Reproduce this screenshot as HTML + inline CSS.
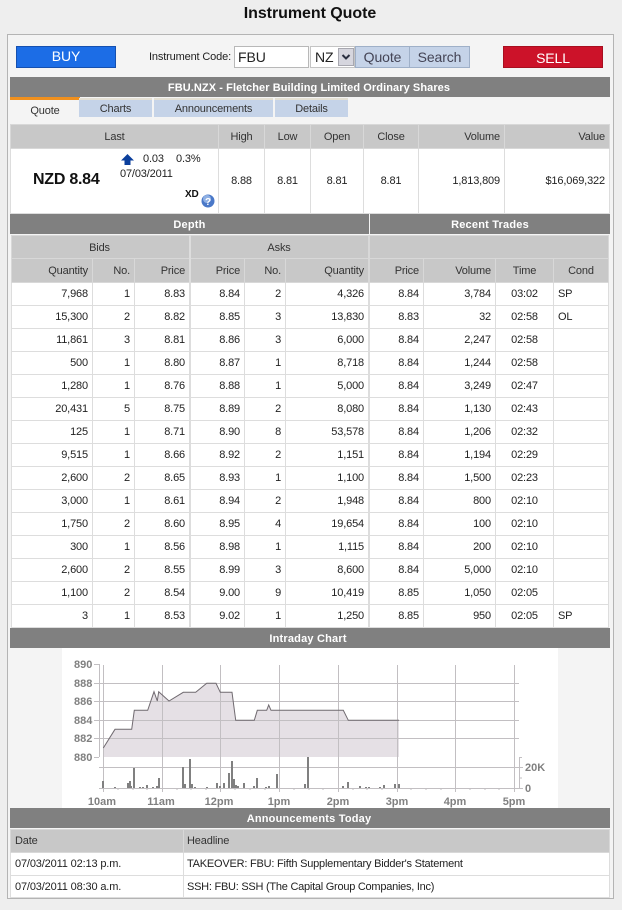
<!DOCTYPE html>
<html><head><meta charset="utf-8"><title>Instrument Quote</title>
<style>
html,body{margin:0;padding:0;background:#eeeeee;}
body{width:622px;height:910px;position:relative;overflow:hidden;font:11px "Liberation Sans",Arial,sans-serif;letter-spacing:-.15px;color:#222;}
.a{position:absolute;white-space:nowrap;}
.bar{position:absolute;left:10px;width:600px;height:20px;line-height:22px;background:#808080;color:#fff;font-weight:bold;font-size:11px;text-align:center;letter-spacing:.2px;}
.btn{position:absolute;top:46px;height:22px;box-sizing:border-box;line-height:20px;text-align:center;letter-spacing:-.1px;}
.tab{position:absolute;top:98px;height:17px;line-height:19px;background:#c5d3e8;text-align:center;color:#333;border-top:2px solid #e4e0d4;box-sizing:content-box;}
table{position:absolute;border-collapse:collapse;table-layout:fixed;font-size:11px;background:#fff;}
td,th{padding:0 4px;border:1px solid #dddddd;font-weight:normal;text-align:right;overflow:hidden;white-space:nowrap;height:22px;box-sizing:border-box;color:#222;}
th{background:#c8c8c8;border-color:#d8d8d8;color:#333;}
.c{text-align:center;}.l{text-align:left;}
.n{letter-spacing:-.22px;}
</style></head><body>
<div class="a" style="left:-1px;top:4px;width:622px;text-align:center;font-size:16px;font-weight:bold;line-height:20px;color:#111;letter-spacing:-.05px;">Instrument Quote</div>
<div class="a" style="left:7px;top:34px;width:605px;height:863px;border:1px solid #b4b4b4;background:#f4f4f4;"></div>

<div class="btn" style="left:16px;width:100px;background:#1c6de6;border:1px solid #1550b0;color:#fff;font-size:14px;line-height:18px;">BUY</div>
<div class="a" style="left:149px;top:50px;line-height:14px;">Instrument Code:</div>
<div class="btn" style="left:234px;width:75px;background:#fff;border:1px solid #b8b8b8;font-size:14px;text-align:left;padding-left:3px;color:#222;">FBU</div>
<div class="btn" style="left:310px;width:45px;background:#fff;border:1px solid #c4c4c4;font-size:14px;text-align:left;padding-left:4px;color:#222;">NZ</div>
<div class="a" style="left:338px;top:48px;width:16px;height:18px;background:#d6d6de;border:1px solid #a8a8b0;box-sizing:border-box;"><svg width="14" height="16" style="display:block"><path d="M3.5 6 L7 9.5 L10.5 6" fill="none" stroke="#2a2f40" stroke-width="2"/></svg></div>
<div class="btn" style="left:355px;width:55px;background:#c5d3e8;border:1px solid #9fb0c8;font-size:14px;color:#445;">Quote</div>
<div class="btn" style="left:409px;width:61px;background:#c5d3e8;border:1px solid #9fb0c8;font-size:14px;color:#445;">Search</div>
<div class="btn" style="left:503px;width:100px;background:#cc1229;border:1px solid #a80f20;color:#fff;font-size:14px;line-height:22px;">SELL</div>

<div class="bar" style="top:77px;letter-spacing:.08px;"><span style="position:relative;left:-1px;">FBU.NZX - Fletcher Building Limited Ordinary Shares</span></div>
<div class="a" style="left:10px;top:97px;width:70px;height:3px;background:#f0901e;"></div>
<div class="a" style="left:10px;top:101px;width:70px;height:20px;line-height:20px;text-align:center;color:#333;">Quote</div>
<div class="tab" style="left:79px;width:73px;">Charts</div>
<div class="tab" style="left:154px;width:119px;">Announcements</div>
<div class="tab" style="left:275px;width:73px;">Details</div>

<table style="left:10px;top:124px;width:599px;">
<colgroup><col style="width:208px"><col style="width:46px"><col style="width:46px"><col style="width:53px"><col style="width:55px"><col style="width:86px"><col style="width:105px"></colgroup>
<tr><th class="c" style="height:24px">Last</th><th class="c" style="height:24px">High</th><th class="c" style="height:24px">Low</th><th class="c" style="height:24px">Open</th><th class="c" style="height:24px">Close</th><th style="height:24px">Volume</th><th style="height:24px">Value</th></tr>
<tr><td style="height:65px"></td><td class="c" style="height:65px">8.88</td><td class="c" style="height:65px">8.81</td><td class="c" style="height:65px">8.81</td><td class="c" style="height:65px">8.81</td><td style="height:65px">1,813,809</td><td style="height:65px">$16,069,322</td></tr>
</table>
<div class="a" style="left:33px;top:170px;font-size:16px;font-weight:bold;line-height:20px;color:#111;letter-spacing:-.25px;">NZD 8.84</div>
<svg class="a" style="left:120px;top:153px;" width="15" height="13"><path d="M7.5 1 L14 7.5 L10.5 7.5 L10.5 12 L4.5 12 L4.5 7.5 L1 7.5 Z" fill="#0b3f9c"/></svg>
<div class="a" style="left:143px;top:152px;line-height:14px;">0.03</div>
<div class="a" style="left:176px;top:152px;line-height:14px;">0.3%</div>
<div class="a" style="left:120px;top:167px;line-height:14px;">07/03/2011</div>
<div class="a" style="left:185px;top:188px;line-height:14px;font-weight:bold;font-size:10px;color:#111;">XD</div>
<svg class="a" style="left:201px;top:194px;" width="14" height="14"><circle cx="7" cy="7" r="6.5" fill="#4a78c8"/><circle cx="6" cy="5" r="4" fill="#8fb0e4"/><text x="7" y="11" text-anchor="middle" font-family="Liberation Sans" font-weight="bold" font-size="10" fill="#fff">?</text></svg>

<div class="bar" style="top:214px;width:359px;left:10px;">Depth</div>
<div class="bar" style="top:214px;width:240px;left:370px;">Recent Trades</div>

<table style="left:11px;top:235px;width:357px;">
<colgroup><col style="width:81px"><col style="width:42px"><col style="width:55px"><col style="width:55px"><col style="width:41px"><col style="width:83px"></colgroup>
<tr><th colspan="3" class="c" style="height:23px;padding-top:2px;padding-right:6px">Bids</th><th colspan="3" class="c" style="height:23px;padding-top:2px">Asks</th></tr>
<tr><th style="height:24px">Quantity</th><th style="height:24px">No.</th><th style="height:24px">Price</th><th style="height:24px">Price</th><th style="height:24px">No.</th><th style="height:24px">Quantity</th></tr>
<tr style="height:23px"><td style="height:23px">7,968</td><td>1</td><td>8.83</td><td>8.84</td><td>2</td><td>4,326</td></tr>
<tr><td style="height:23px">15,300</td><td>2</td><td>8.82</td><td>8.85</td><td>3</td><td>13,830</td></tr>
<tr><td style="height:23px">11,861</td><td>3</td><td>8.81</td><td>8.86</td><td>3</td><td>6,000</td></tr>
<tr><td style="height:23px">500</td><td>1</td><td>8.80</td><td>8.87</td><td>1</td><td>8,718</td></tr>
<tr><td style="height:23px">1,280</td><td>1</td><td>8.76</td><td>8.88</td><td>1</td><td>5,000</td></tr>
<tr><td style="height:23px">20,431</td><td>5</td><td>8.75</td><td>8.89</td><td>2</td><td>8,080</td></tr>
<tr><td style="height:23px">125</td><td>1</td><td>8.71</td><td>8.90</td><td>8</td><td>53,578</td></tr>
<tr><td style="height:23px">9,515</td><td>1</td><td>8.66</td><td>8.92</td><td>2</td><td>1,151</td></tr>
<tr><td style="height:23px">2,600</td><td>2</td><td>8.65</td><td>8.93</td><td>1</td><td>1,100</td></tr>
<tr><td style="height:23px">3,000</td><td>1</td><td>8.61</td><td>8.94</td><td>2</td><td>1,948</td></tr>
<tr><td style="height:23px">1,750</td><td>2</td><td>8.60</td><td>8.95</td><td>4</td><td>19,654</td></tr>
<tr><td style="height:23px">300</td><td>1</td><td>8.56</td><td>8.98</td><td>1</td><td>1,115</td></tr>
<tr><td style="height:23px">2,600</td><td>2</td><td>8.55</td><td>8.99</td><td>3</td><td>8,600</td></tr>
<tr><td style="height:23px">1,100</td><td>2</td><td>8.54</td><td>9.00</td><td>9</td><td>10,419</td></tr>
<tr><td style="height:23px">3</td><td>1</td><td>8.53</td><td>9.02</td><td>1</td><td>1,250</td></tr>
</table>
<div class="a" style="left:189px;top:235px;width:2px;height:392px;background:#dddddd;"></div>

<table style="left:369px;top:235px;width:239px;">
<colgroup><col style="width:54px"><col style="width:72px"><col style="width:58px"><col style="width:55px"></colgroup>
<tr><th colspan="4" style="height:23px"></th></tr>
<tr><th style="height:24px">Price</th><th style="height:24px">Volume</th><th class="c" style="height:24px">Time</th><th class="c" style="height:24px">Cond</th></tr>
<tr><td style="height:23px">8.84</td><td>3,784</td><td class="c">03:02</td><td class="l">SP</td></tr>
<tr><td style="height:23px">8.83</td><td>32</td><td class="c">02:58</td><td class="l">OL</td></tr>
<tr><td style="height:23px">8.84</td><td>2,247</td><td class="c">02:58</td><td class="l"></td></tr>
<tr><td style="height:23px">8.84</td><td>1,244</td><td class="c">02:58</td><td class="l"></td></tr>
<tr><td style="height:23px">8.84</td><td>3,249</td><td class="c">02:47</td><td class="l"></td></tr>
<tr><td style="height:23px">8.84</td><td>1,130</td><td class="c">02:43</td><td class="l"></td></tr>
<tr><td style="height:23px">8.84</td><td>1,206</td><td class="c">02:32</td><td class="l"></td></tr>
<tr><td style="height:23px">8.84</td><td>1,194</td><td class="c">02:29</td><td class="l"></td></tr>
<tr><td style="height:23px">8.84</td><td>1,500</td><td class="c">02:23</td><td class="l"></td></tr>
<tr><td style="height:23px">8.84</td><td>800</td><td class="c">02:10</td><td class="l"></td></tr>
<tr><td style="height:23px">8.84</td><td>100</td><td class="c">02:10</td><td class="l"></td></tr>
<tr><td style="height:23px">8.84</td><td>200</td><td class="c">02:10</td><td class="l"></td></tr>
<tr><td style="height:23px">8.84</td><td>5,000</td><td class="c">02:10</td><td class="l"></td></tr>
<tr><td style="height:23px">8.85</td><td>1,050</td><td class="c">02:05</td><td class="l"></td></tr>
<tr><td style="height:23px">8.85</td><td>950</td><td class="c">02:05</td><td class="l">SP</td></tr>
</table>

<div class="bar" style="top:628px;"><span style="position:relative;left:-2px;">Intraday Chart</span></div>
<svg class="a" style="left:62px;top:648px;background:#fff;" width="496" height="160" viewBox="62 648 496 160">
<path d="M103.3 748 L115 729.3 L131.7 729.3 L134.3 710.3 L147.7 710.3 L154 691.7 L157.3 701 L158.7 691.7 L169 701 L183.3 692.3 L195.7 692.3 L206.7 683.3 L216 683.3 L220.3 692.3 L232 692.3 L235.7 720.3 L254.3 720.3 L257.3 710.3 L266.7 710.3 L268.7 705 L271 710.3 L343.3 710.3 L348.3 720.3 L399 720.3 L399 757 L103.3 757 Z" fill="#e5e0e5"/>
<g stroke="#c2bfc2" stroke-width="1" fill="none" shape-rendering="crispEdges">
<path d="M94 664.5H99M94 683.5H519M94 701.5H519M94 720.5H519M94 738.5H519M94 757.5H99M99 767.5H519M99 788.5H519"/>
<path d="M103.5 665V792M162.5 665V792M220.5 665V792M279.5 665V792M338.5 665V792M397.5 665V792M455.5 665V792M514.5 665V792"/>
<path d="M99.5 664V757M519.5 757V788M519 767.5H523M519 778H522M519 757.5H522M519 788.5H523"/>
<path d="M118 788V790M133 788V790M147 788V790M177 788V790M191 788V790M206 788V790M235 788V790M250 788V790M265 788V790M294 788V790M309 788V790M323 788V790M353 788V790M367 788V790M382 788V790M411 788V790M426 788V790M441 788V790M470 788V790M485 788V790M499 788V790"/>
</g>
<path d="M103.3 748 L115 729.3 L131.7 729.3 L134.3 710.3 L147.7 710.3 L154 691.7 L157.3 701 L158.7 691.7 L169 701 L183.3 692.3 L195.7 692.3 L206.7 683.3 L216 683.3 L220.3 692.3 L232 692.3 L235.7 720.3 L254.3 720.3 L257.3 710.3 L266.7 710.3 L268.7 705 L271 710.3 L343.3 710.3 L348.3 720.3 L399 720.3" fill="none" stroke="#706a70" stroke-width="1"/>
<g fill="#808080" shape-rendering="crispEdges">
<rect x="102" y="781" width="2" height="7"/><rect x="114" y="787" width="2" height="1"/><rect x="127" y="783" width="2" height="5"/><rect x="129" y="781" width="2" height="7"/><rect x="131" y="786" width="1" height="2"/><rect x="133" y="768" width="2" height="20"/><rect x="139" y="787" width="2" height="1"/><rect x="142" y="787" width="2" height="1"/><rect x="146" y="785" width="2" height="3"/><rect x="152" y="787" width="2" height="1"/><rect x="156" y="786" width="2" height="2"/><rect x="158" y="778" width="2" height="10"/><rect x="182" y="767" width="2" height="21"/><rect x="184" y="784" width="2" height="4"/><rect x="189" y="759" width="2" height="29"/><rect x="191" y="784" width="2" height="4"/><rect x="194" y="787" width="2" height="1"/><rect x="206" y="787" width="2" height="1"/><rect x="216" y="783" width="2" height="5"/><rect x="219" y="786" width="2" height="2"/><rect x="223" y="783" width="2" height="5"/><rect x="228" y="773" width="2" height="15"/><rect x="231" y="761" width="2" height="27"/><rect x="233" y="779" width="2" height="9"/><rect x="235" y="785" width="2" height="3"/><rect x="237" y="786" width="2" height="2"/><rect x="243" y="783" width="2" height="5"/><rect x="253" y="786" width="2" height="2"/><rect x="256" y="778" width="2" height="10"/><rect x="265" y="787" width="2" height="1"/><rect x="268" y="786" width="2" height="2"/><rect x="276" y="774" width="2" height="14"/><rect x="304" y="784" width="2" height="4"/><rect x="307" y="757" width="2" height="31"/><rect x="342" y="786" width="2" height="2"/><rect x="347" y="782" width="2" height="6"/><rect x="359" y="786" width="2" height="2"/><rect x="365" y="787" width="2" height="1"/><rect x="368" y="787" width="2" height="1"/><rect x="379" y="787" width="2" height="1"/><rect x="383" y="785" width="2" height="3"/><rect x="394" y="784" width="2" height="4"/><rect x="398" y="784" width="2" height="4"/>
</g>
<g font-family="Liberation Sans" font-weight="bold" font-size="11" fill="#808080" letter-spacing="0">
<text x="74" y="668">890</text><text x="74" y="687">888</text><text x="74" y="705">886</text><text x="74" y="724">884</text><text x="74" y="742">882</text><text x="74" y="761">880</text>
<text x="525" y="771">20K</text><text x="525" y="792">0</text>
<g text-anchor="middle"><text x="102" y="805">10am</text><text x="161" y="805">11am</text><text x="219" y="805">12pm</text><text x="279" y="805">1pm</text><text x="338" y="805">2pm</text><text x="397" y="805">3pm</text><text x="455" y="805">4pm</text><text x="514" y="805">5pm</text></g>
</g>
</svg>
<div class="bar" style="top:808px;"><span style="position:relative;left:-1px;">Announcements Today</span></div>
<table style="left:10px;top:829px;width:599px;">
<colgroup><col style="width:173px"><col style="width:426px"></colgroup>
<tr><th class="l" style="height:23px;padding-left:4px">Date</th><th class="l" style="height:23px;padding-left:3px">Headline</th></tr>
<tr><td class="l" style="height:23px;padding-left:4px">07/03/2011 02:13 p.m.</td><td class="l n" style="padding-left:3px">TAKEOVER: FBU: Fifth Supplementary Bidder's Statement</td></tr>
<tr><td class="l" style="height:22px;padding-left:4px">07/03/2011 08:30 a.m.</td><td class="l n" style="padding-left:3px;letter-spacing:-.25px">SSH: FBU: SSH (The Capital Group Companies, Inc)</td></tr>
</table>
</body></html>
